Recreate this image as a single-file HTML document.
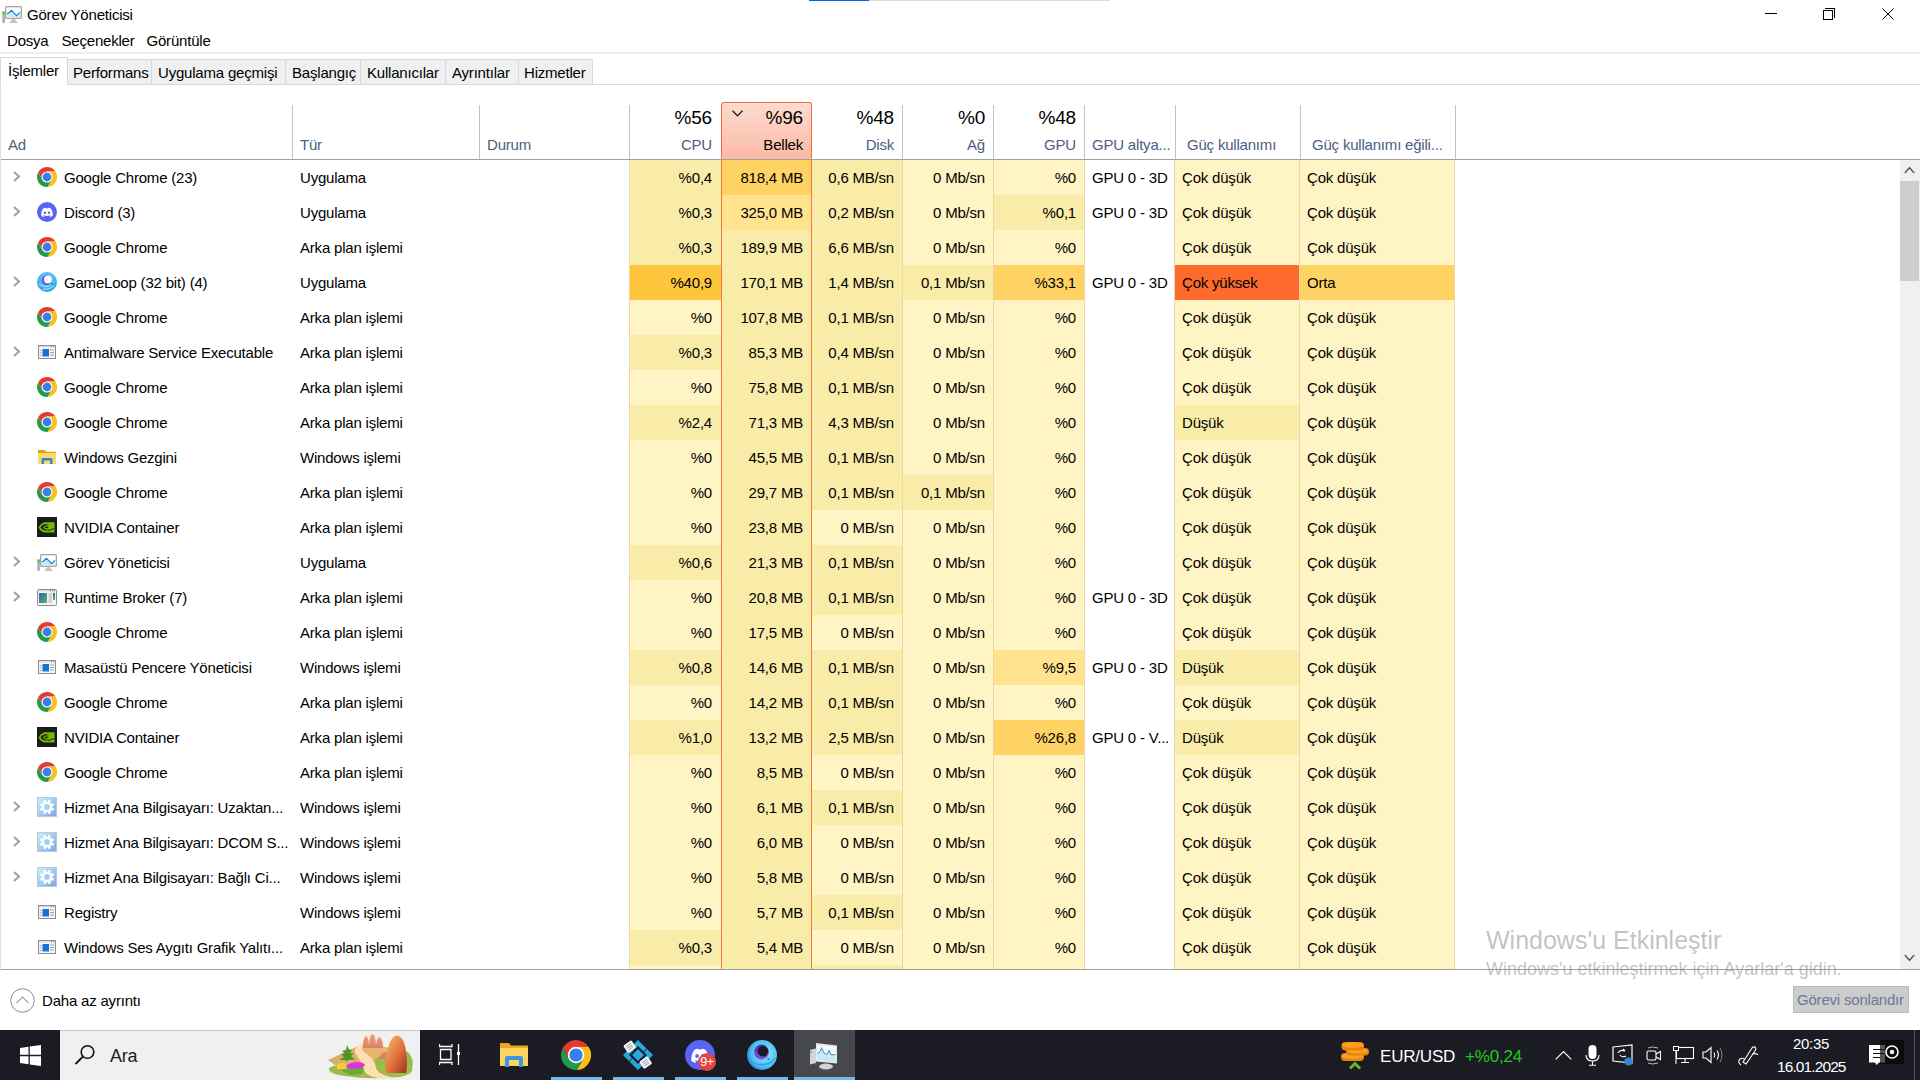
<!DOCTYPE html><html><head><meta charset="utf-8"><style>
*{margin:0;padding:0;box-sizing:border-box}
html,body{width:1920px;height:1080px;overflow:hidden;background:#fff}
body{position:relative;font-family:"Liberation Sans",sans-serif;font-size:15px;color:#000}
.a{position:absolute;white-space:nowrap}
.t{position:absolute;white-space:nowrap;line-height:20px;height:20px;letter-spacing:-0.2px}
.r{text-align:right}
.hl{color:#4c6080}
svg{display:block}
</style></head><body>

<div class="a" style="left:809px;top:0;width:60px;height:1px;background:#0068d0"></div>
<div class="a" style="left:869px;top:0;width:241px;height:1px;background:#dcdcdc"></div>
<div class="a" style="left:2px;top:4px"><svg width="20" height="20" viewBox="0 0 20 20"><rect x="0.2" y="7" width="2.8" height="12" rx="0.8" fill="#b4b4b4"/><rect x="0.5" y="8.3" width="2.2" height="1.8" fill="#30d030"/><rect x="3.6" y="2.6" width="15.8" height="11.8" rx="1" fill="#efefef" stroke="#a4a4a4" stroke-width="1.2"/><rect x="4.8" y="3.8" width="13.4" height="9.4" fill="#fff"/><path d="M4.8 9.5 L6.2 9.5 L9.5 6.3 L14.5 11.6 L18.2 8 V13.2 H4.8 Z" fill="#c4ecfc"/><path d="M4.8 9.5 L6.2 9.5 L9.5 6.3 L14.5 11.6 L18 8.3" stroke="#1a7cc8" stroke-width="1.1" fill="none"/><path d="M7 19 L10.5 15 L12.5 15 L16 19 Z" fill="#c4c4c4"/></svg></div>
<div class="t" style="top:4.80px;font-size:15px;left:27px;">Görev Yöneticisi</div>
<div class="a" style="left:1765px;top:13px;width:12px;height:1px;background:#000"></div>
<div class="a" style="left:1823px;top:10px;width:10px;height:10px;border:1px solid #000"></div>
<div class="a" style="left:1825px;top:8px;width:10px;height:10px;border-top:1px solid #000;border-right:1px solid #000"></div>
<svg class="a" style="left:1882px;top:8px" width="12" height="12" viewBox="0 0 12 12"><path d="M0.5 0.5 L11.5 11.5 M11.5 0.5 L0.5 11.5" stroke="#000" stroke-width="1"/></svg>
<div class="t" style="top:31.30px;font-size:15px;left:7px;">Dosya</div>
<div class="t" style="top:31.30px;font-size:15px;left:61.5px;">Seçenekler</div>
<div class="t" style="top:31.30px;font-size:15px;left:146.5px;">Görüntüle</div>
<div class="a" style="left:0;top:52px;width:1920px;height:2px;background:#f0f0f0"></div>
<div class="a" style="left:0;top:84px;width:1920px;height:1px;background:#d9d9d9"></div>
<div class="a" style="left:0;top:57px;width:68px;height:28px;background:#fff;border:1px solid #d9d9d9;border-bottom:none"></div>
<div class="t" style="top:61.00px;font-size:15px;left:8px;">İşlemler</div>
<div class="a" style="left:67px;top:59px;width:85px;height:26px;background:#f0f0f0;border:1px solid #d9d9d9"></div>
<div class="t" style="top:63.00px;font-size:15px;left:73px;">Performans</div>
<div class="a" style="left:151px;top:59px;width:135px;height:26px;background:#f0f0f0;border:1px solid #d9d9d9"></div>
<div class="t" style="top:63.00px;font-size:15px;left:158px;">Uygulama geçmişi</div>
<div class="a" style="left:285px;top:59px;width:76px;height:26px;background:#f0f0f0;border:1px solid #d9d9d9"></div>
<div class="t" style="top:63.00px;font-size:15px;left:292px;">Başlangıç</div>
<div class="a" style="left:360px;top:59px;width:86px;height:26px;background:#f0f0f0;border:1px solid #d9d9d9"></div>
<div class="t" style="top:63.00px;font-size:15px;left:367px;">Kullanıcılar</div>
<div class="a" style="left:445px;top:59px;width:74px;height:26px;background:#f0f0f0;border:1px solid #d9d9d9"></div>
<div class="t" style="top:63.00px;font-size:15px;left:452px;">Ayrıntılar</div>
<div class="a" style="left:518px;top:59px;width:75px;height:26px;background:#f0f0f0;border:1px solid #d9d9d9"></div>
<div class="t" style="top:63.00px;font-size:15px;left:524px;">Hizmetler</div>
<div class="a" style="left:0;top:85px;width:1px;height:885px;background:#e3e3e3"></div>
<div class="a" style="left:292px;top:105px;width:1px;height:54px;background:#c2c2c2"></div>
<div class="a" style="left:479px;top:105px;width:1px;height:54px;background:#c2c2c2"></div>
<div class="a" style="left:629px;top:105px;width:1px;height:54px;background:#c2c2c2"></div>
<div class="a" style="left:902px;top:105px;width:1px;height:54px;background:#c2c2c2"></div>
<div class="a" style="left:993px;top:105px;width:1px;height:54px;background:#c2c2c2"></div>
<div class="a" style="left:1084px;top:105px;width:1px;height:54px;background:#c2c2c2"></div>
<div class="a" style="left:1175px;top:105px;width:1px;height:54px;background:#c2c2c2"></div>
<div class="a" style="left:1300px;top:105px;width:1px;height:54px;background:#c2c2c2"></div>
<div class="a" style="left:1455px;top:105px;width:1px;height:54px;background:#c2c2c2"></div>
<div class="a" style="left:721px;top:102px;width:91px;height:58px;border:1px solid #f66a3a;border-bottom:none;border-radius:3px 3px 0 0;background:linear-gradient(#fddbd0,#fbb9a4)"></div>
<svg class="a" style="left:732px;top:110px" width="11" height="7" viewBox="0 0 11 7"><path d="M0.5 0.8 L5.5 5.8 L10.5 0.8" stroke="#222" stroke-width="1.3" fill="none"/></svg>
<div class="t" style="top:134.80px;font-size:15px;color:#4c6080;left:8px;">Ad</div>
<div class="t" style="top:134.80px;font-size:15px;color:#4c6080;left:300px;">Tür</div>
<div class="t" style="top:134.80px;font-size:15px;color:#4c6080;left:487px;">Durum</div>
<div class="t" style="top:108.42px;font-size:19px;right:1208px;">%56</div>
<div class="t" style="top:134.80px;font-size:15px;color:#4c6080;right:1208px;">CPU</div>
<div class="t" style="top:108.42px;font-size:19px;right:1117px;">%96</div>
<div class="t" style="top:134.80px;font-size:15px;color:#000;right:1117px;">Bellek</div>
<div class="t" style="top:108.42px;font-size:19px;right:1026px;">%48</div>
<div class="t" style="top:134.80px;font-size:15px;color:#4c6080;right:1026px;">Disk</div>
<div class="t" style="top:108.42px;font-size:19px;right:935px;">%0</div>
<div class="t" style="top:134.80px;font-size:15px;color:#4c6080;right:935px;">Ağ</div>
<div class="t" style="top:108.42px;font-size:19px;right:844px;">%48</div>
<div class="t" style="top:134.80px;font-size:15px;color:#4c6080;right:844px;">GPU</div>
<div class="t" style="top:134.80px;font-size:15px;color:#4c6080;left:1092px;">GPU altya...</div>
<div class="t" style="top:134.80px;font-size:15px;color:#4c6080;left:1187px;">Güç kullanımı</div>
<div class="t" style="top:134.80px;font-size:15px;color:#4c6080;left:1312px;">Güç kullanımı eğili...</div>
<div class="a" style="left:1px;top:159px;width:1919px;height:1px;background:#a0a0a0"></div>
<div class="a" style="left:629px;top:160px;width:92px;height:35px;background:#f9eca8"></div>
<div class="a" style="left:721px;top:160px;width:90px;height:35px;background:#ffd264"></div>
<div class="a" style="left:811px;top:160px;width:91px;height:35px;background:#f9eca8"></div>
<div class="a" style="left:902px;top:160px;width:91px;height:35px;background:#fff4c4"></div>
<div class="a" style="left:993px;top:160px;width:91px;height:35px;background:#fff4c4"></div>
<div class="a" style="left:1174px;top:160px;width:125px;height:35px;background:#fff4c4"></div>
<div class="a" style="left:1299px;top:160px;width:155px;height:35px;background:#fff4c4"></div>
<svg class="a" style="left:12px;top:170px" width="10" height="14" viewBox="0 0 10 14"><path d="M2 2 L7 6.5 L2 11" stroke="#a0a0a0" stroke-width="2" fill="none"/></svg>
<div class="a" style="left:37px;top:167px"><svg width="20" height="20" viewBox="0 0 20 20"><path d="M10.00 4.60 L18.42 4.60 A10 10 0 0 0 1.12 5.41 L5.32 12.70 Z" fill="#e33b2e"/><path d="M14.68 12.70 L10.47 19.99 A10 10 0 0 0 18.42 4.60 L10.00 4.60 Z" fill="#fbbf1a"/><path d="M5.32 12.70 L1.12 5.41 A10 10 0 0 0 10.47 19.99 L14.68 12.70 Z" fill="#239a48"/><circle cx="10" cy="10" r="5.5" fill="#fff"/><circle cx="10" cy="10" r="4.4" fill="#3b7ee8"/></svg></div>
<div class="t" style="top:167.80px;left:64px;">Google Chrome (23)</div>
<div class="t" style="top:167.80px;left:300px;">Uygulama</div>
<div class="t" style="top:167.80px;right:1208px;">%0,4</div>
<div class="t" style="top:167.80px;right:1117px;">818,4 MB</div>
<div class="t" style="top:167.80px;right:1026px;">0,6 MB/sn</div>
<div class="t" style="top:167.80px;right:935px;">0 Mb/sn</div>
<div class="t" style="top:167.80px;right:844px;">%0</div>
<div class="t" style="top:167.80px;left:1092px;">GPU 0 - 3D</div>
<div class="t" style="top:167.80px;left:1182px;">Çok düşük</div>
<div class="t" style="top:167.80px;left:1307px;">Çok düşük</div>
<div class="a" style="left:629px;top:195px;width:92px;height:35px;background:#f9eca8"></div>
<div class="a" style="left:721px;top:195px;width:90px;height:35px;background:#ffe38f"></div>
<div class="a" style="left:811px;top:195px;width:91px;height:35px;background:#f9eca8"></div>
<div class="a" style="left:902px;top:195px;width:91px;height:35px;background:#fff4c4"></div>
<div class="a" style="left:993px;top:195px;width:91px;height:35px;background:#f9eca8"></div>
<div class="a" style="left:1174px;top:195px;width:125px;height:35px;background:#fff4c4"></div>
<div class="a" style="left:1299px;top:195px;width:155px;height:35px;background:#fff4c4"></div>
<svg class="a" style="left:12px;top:205px" width="10" height="14" viewBox="0 0 10 14"><path d="M2 2 L7 6.5 L2 11" stroke="#a0a0a0" stroke-width="2" fill="none"/></svg>
<div class="a" style="left:37px;top:202px"><svg width="20" height="20" viewBox="0 0 20 20"><circle cx="10" cy="10" r="10" fill="#5865f2"/><path d="M4.2 13.8 C4.1 10.8 4.9 8.3 6.2 6.6 C7.1 6.1 8 5.8 8.7 5.8 L9 6.4 C9.7 6.3 10.3 6.3 11 6.4 L11.3 5.8 C12 5.8 12.9 6.1 13.8 6.6 C15.1 8.3 15.9 10.8 15.8 13.8 C15 14.5 14 14.9 13.1 15.1 L12.5 14.2 C13 14 13.4 13.8 13.8 13.5 L13.5 13.3 C11.3 14.3 8.7 14.3 6.5 13.3 L6.2 13.5 C6.6 13.8 7 14 7.5 14.2 L6.9 15.1 C6 14.9 5 14.5 4.2 13.8 Z" fill="#fff"/><ellipse cx="8" cy="10.7" rx="1.2" ry="1.3" fill="#5865f2"/><ellipse cx="12" cy="10.7" rx="1.2" ry="1.3" fill="#5865f2"/></svg></div>
<div class="t" style="top:202.80px;left:64px;">Discord (3)</div>
<div class="t" style="top:202.80px;left:300px;">Uygulama</div>
<div class="t" style="top:202.80px;right:1208px;">%0,3</div>
<div class="t" style="top:202.80px;right:1117px;">325,0 MB</div>
<div class="t" style="top:202.80px;right:1026px;">0,2 MB/sn</div>
<div class="t" style="top:202.80px;right:935px;">0 Mb/sn</div>
<div class="t" style="top:202.80px;right:844px;">%0,1</div>
<div class="t" style="top:202.80px;left:1092px;">GPU 0 - 3D</div>
<div class="t" style="top:202.80px;left:1182px;">Çok düşük</div>
<div class="t" style="top:202.80px;left:1307px;">Çok düşük</div>
<div class="a" style="left:629px;top:230px;width:92px;height:35px;background:#f9eca8"></div>
<div class="a" style="left:721px;top:230px;width:90px;height:35px;background:#f9eca8"></div>
<div class="a" style="left:811px;top:230px;width:91px;height:35px;background:#f9eca8"></div>
<div class="a" style="left:902px;top:230px;width:91px;height:35px;background:#fff4c4"></div>
<div class="a" style="left:993px;top:230px;width:91px;height:35px;background:#fff4c4"></div>
<div class="a" style="left:1174px;top:230px;width:125px;height:35px;background:#fff4c4"></div>
<div class="a" style="left:1299px;top:230px;width:155px;height:35px;background:#fff4c4"></div>
<div class="a" style="left:37px;top:237px"><svg width="20" height="20" viewBox="0 0 20 20"><path d="M10.00 4.60 L18.42 4.60 A10 10 0 0 0 1.12 5.41 L5.32 12.70 Z" fill="#e33b2e"/><path d="M14.68 12.70 L10.47 19.99 A10 10 0 0 0 18.42 4.60 L10.00 4.60 Z" fill="#fbbf1a"/><path d="M5.32 12.70 L1.12 5.41 A10 10 0 0 0 10.47 19.99 L14.68 12.70 Z" fill="#239a48"/><circle cx="10" cy="10" r="5.5" fill="#fff"/><circle cx="10" cy="10" r="4.4" fill="#3b7ee8"/></svg></div>
<div class="t" style="top:237.80px;left:64px;">Google Chrome</div>
<div class="t" style="top:237.80px;left:300px;">Arka plan işlemi</div>
<div class="t" style="top:237.80px;right:1208px;">%0,3</div>
<div class="t" style="top:237.80px;right:1117px;">189,9 MB</div>
<div class="t" style="top:237.80px;right:1026px;">6,6 MB/sn</div>
<div class="t" style="top:237.80px;right:935px;">0 Mb/sn</div>
<div class="t" style="top:237.80px;right:844px;">%0</div>
<div class="t" style="top:237.80px;left:1182px;">Çok düşük</div>
<div class="t" style="top:237.80px;left:1307px;">Çok düşük</div>
<div class="a" style="left:629px;top:265px;width:92px;height:35px;background:#ffc53d"></div>
<div class="a" style="left:721px;top:265px;width:90px;height:35px;background:#f9eca8"></div>
<div class="a" style="left:811px;top:265px;width:91px;height:35px;background:#f9eca8"></div>
<div class="a" style="left:902px;top:265px;width:91px;height:35px;background:#f9eca8"></div>
<div class="a" style="left:993px;top:265px;width:91px;height:35px;background:#ffd264"></div>
<div class="a" style="left:1174px;top:265px;width:125px;height:35px;background:#fc6a2c"></div>
<div class="a" style="left:1299px;top:265px;width:155px;height:35px;background:#ffd264"></div>
<svg class="a" style="left:12px;top:275px" width="10" height="14" viewBox="0 0 10 14"><path d="M2 2 L7 6.5 L2 11" stroke="#a0a0a0" stroke-width="2" fill="none"/></svg>
<div class="a" style="left:37px;top:272px"><svg width="20" height="20" viewBox="0 0 20 20"><defs><radialGradient id="gl" cx="0.5" cy="0.4" r="0.65"><stop offset="0" stop-color="#7fe3fb"/><stop offset="0.7" stop-color="#3cb4ef"/><stop offset="1" stop-color="#2a86d8"/></radialGradient></defs><circle cx="10" cy="10" r="10" fill="url(#gl)"/><circle cx="9.6" cy="8.2" r="5" fill="#7a4fd8"/><circle cx="10.9" cy="7.4" r="3.9" fill="#fbfbff"/><path d="M2 12.5 Q7 16 13 14 M6 17.5 Q12 18 17 14" stroke="#9ee6fa" stroke-width="1" fill="none"/><path d="M14 11.5 L16 12" stroke="#2a70c0" stroke-width="1"/></svg></div>
<div class="t" style="top:272.80px;left:64px;">GameLoop (32 bit) (4)</div>
<div class="t" style="top:272.80px;left:300px;">Uygulama</div>
<div class="t" style="top:272.80px;right:1208px;">%40,9</div>
<div class="t" style="top:272.80px;right:1117px;">170,1 MB</div>
<div class="t" style="top:272.80px;right:1026px;">1,4 MB/sn</div>
<div class="t" style="top:272.80px;right:935px;">0,1 Mb/sn</div>
<div class="t" style="top:272.80px;right:844px;">%33,1</div>
<div class="t" style="top:272.80px;left:1092px;">GPU 0 - 3D</div>
<div class="t" style="top:272.80px;left:1182px;">Çok yüksek</div>
<div class="t" style="top:272.80px;left:1307px;">Orta</div>
<div class="a" style="left:629px;top:300px;width:92px;height:35px;background:#fff4c4"></div>
<div class="a" style="left:721px;top:300px;width:90px;height:35px;background:#f9eca8"></div>
<div class="a" style="left:811px;top:300px;width:91px;height:35px;background:#f9eca8"></div>
<div class="a" style="left:902px;top:300px;width:91px;height:35px;background:#fff4c4"></div>
<div class="a" style="left:993px;top:300px;width:91px;height:35px;background:#fff4c4"></div>
<div class="a" style="left:1174px;top:300px;width:125px;height:35px;background:#fff4c4"></div>
<div class="a" style="left:1299px;top:300px;width:155px;height:35px;background:#fff4c4"></div>
<div class="a" style="left:37px;top:307px"><svg width="20" height="20" viewBox="0 0 20 20"><path d="M10.00 4.60 L18.42 4.60 A10 10 0 0 0 1.12 5.41 L5.32 12.70 Z" fill="#e33b2e"/><path d="M14.68 12.70 L10.47 19.99 A10 10 0 0 0 18.42 4.60 L10.00 4.60 Z" fill="#fbbf1a"/><path d="M5.32 12.70 L1.12 5.41 A10 10 0 0 0 10.47 19.99 L14.68 12.70 Z" fill="#239a48"/><circle cx="10" cy="10" r="5.5" fill="#fff"/><circle cx="10" cy="10" r="4.4" fill="#3b7ee8"/></svg></div>
<div class="t" style="top:307.80px;left:64px;">Google Chrome</div>
<div class="t" style="top:307.80px;left:300px;">Arka plan işlemi</div>
<div class="t" style="top:307.80px;right:1208px;">%0</div>
<div class="t" style="top:307.80px;right:1117px;">107,8 MB</div>
<div class="t" style="top:307.80px;right:1026px;">0,1 MB/sn</div>
<div class="t" style="top:307.80px;right:935px;">0 Mb/sn</div>
<div class="t" style="top:307.80px;right:844px;">%0</div>
<div class="t" style="top:307.80px;left:1182px;">Çok düşük</div>
<div class="t" style="top:307.80px;left:1307px;">Çok düşük</div>
<div class="a" style="left:629px;top:335px;width:92px;height:35px;background:#f9eca8"></div>
<div class="a" style="left:721px;top:335px;width:90px;height:35px;background:#f9eca8"></div>
<div class="a" style="left:811px;top:335px;width:91px;height:35px;background:#f9eca8"></div>
<div class="a" style="left:902px;top:335px;width:91px;height:35px;background:#fff4c4"></div>
<div class="a" style="left:993px;top:335px;width:91px;height:35px;background:#fff4c4"></div>
<div class="a" style="left:1174px;top:335px;width:125px;height:35px;background:#fff4c4"></div>
<div class="a" style="left:1299px;top:335px;width:155px;height:35px;background:#fff4c4"></div>
<svg class="a" style="left:12px;top:345px" width="10" height="14" viewBox="0 0 10 14"><path d="M2 2 L7 6.5 L2 11" stroke="#a0a0a0" stroke-width="2" fill="none"/></svg>
<div class="a" style="left:37px;top:342px"><svg width="20" height="20" viewBox="0 0 20 20"><rect x="1.5" y="3.5" width="17" height="13" fill="#f7f7f7" stroke="#8c8c8c"/><rect x="2" y="4" width="16" height="1.5" fill="#dedede"/><rect x="14" y="4.2" width="1" height="1" fill="#888"/><rect x="16" y="4.2" width="1" height="1" fill="#888"/><rect x="5.5" y="7" width="6.5" height="7.5" fill="#1372d6"/><rect x="13" y="7.5" width="4" height="1" fill="#a0a0a0"/><rect x="13" y="10" width="4" height="1" fill="#a0a0a0"/><rect x="13" y="12.5" width="4" height="1" fill="#a0a0a0"/><rect x="2.8" y="8" width="1.6" height="1" fill="#a0a0a0"/><rect x="2.8" y="10.5" width="1.6" height="1" fill="#a0a0a0"/><rect x="2.8" y="13" width="1.6" height="1" fill="#a0a0a0"/></svg></div>
<div class="t" style="top:342.80px;left:64px;">Antimalware Service Executable</div>
<div class="t" style="top:342.80px;left:300px;">Arka plan işlemi</div>
<div class="t" style="top:342.80px;right:1208px;">%0,3</div>
<div class="t" style="top:342.80px;right:1117px;">85,3 MB</div>
<div class="t" style="top:342.80px;right:1026px;">0,4 MB/sn</div>
<div class="t" style="top:342.80px;right:935px;">0 Mb/sn</div>
<div class="t" style="top:342.80px;right:844px;">%0</div>
<div class="t" style="top:342.80px;left:1182px;">Çok düşük</div>
<div class="t" style="top:342.80px;left:1307px;">Çok düşük</div>
<div class="a" style="left:629px;top:370px;width:92px;height:35px;background:#fff4c4"></div>
<div class="a" style="left:721px;top:370px;width:90px;height:35px;background:#f9eca8"></div>
<div class="a" style="left:811px;top:370px;width:91px;height:35px;background:#f9eca8"></div>
<div class="a" style="left:902px;top:370px;width:91px;height:35px;background:#fff4c4"></div>
<div class="a" style="left:993px;top:370px;width:91px;height:35px;background:#fff4c4"></div>
<div class="a" style="left:1174px;top:370px;width:125px;height:35px;background:#fff4c4"></div>
<div class="a" style="left:1299px;top:370px;width:155px;height:35px;background:#fff4c4"></div>
<div class="a" style="left:37px;top:377px"><svg width="20" height="20" viewBox="0 0 20 20"><path d="M10.00 4.60 L18.42 4.60 A10 10 0 0 0 1.12 5.41 L5.32 12.70 Z" fill="#e33b2e"/><path d="M14.68 12.70 L10.47 19.99 A10 10 0 0 0 18.42 4.60 L10.00 4.60 Z" fill="#fbbf1a"/><path d="M5.32 12.70 L1.12 5.41 A10 10 0 0 0 10.47 19.99 L14.68 12.70 Z" fill="#239a48"/><circle cx="10" cy="10" r="5.5" fill="#fff"/><circle cx="10" cy="10" r="4.4" fill="#3b7ee8"/></svg></div>
<div class="t" style="top:377.80px;left:64px;">Google Chrome</div>
<div class="t" style="top:377.80px;left:300px;">Arka plan işlemi</div>
<div class="t" style="top:377.80px;right:1208px;">%0</div>
<div class="t" style="top:377.80px;right:1117px;">75,8 MB</div>
<div class="t" style="top:377.80px;right:1026px;">0,1 MB/sn</div>
<div class="t" style="top:377.80px;right:935px;">0 Mb/sn</div>
<div class="t" style="top:377.80px;right:844px;">%0</div>
<div class="t" style="top:377.80px;left:1182px;">Çok düşük</div>
<div class="t" style="top:377.80px;left:1307px;">Çok düşük</div>
<div class="a" style="left:629px;top:405px;width:92px;height:35px;background:#f9eca8"></div>
<div class="a" style="left:721px;top:405px;width:90px;height:35px;background:#f9eca8"></div>
<div class="a" style="left:811px;top:405px;width:91px;height:35px;background:#f9eca8"></div>
<div class="a" style="left:902px;top:405px;width:91px;height:35px;background:#fff4c4"></div>
<div class="a" style="left:993px;top:405px;width:91px;height:35px;background:#fff4c4"></div>
<div class="a" style="left:1174px;top:405px;width:125px;height:35px;background:#f9eca8"></div>
<div class="a" style="left:1299px;top:405px;width:155px;height:35px;background:#fff4c4"></div>
<div class="a" style="left:37px;top:412px"><svg width="20" height="20" viewBox="0 0 20 20"><path d="M10.00 4.60 L18.42 4.60 A10 10 0 0 0 1.12 5.41 L5.32 12.70 Z" fill="#e33b2e"/><path d="M14.68 12.70 L10.47 19.99 A10 10 0 0 0 18.42 4.60 L10.00 4.60 Z" fill="#fbbf1a"/><path d="M5.32 12.70 L1.12 5.41 A10 10 0 0 0 10.47 19.99 L14.68 12.70 Z" fill="#239a48"/><circle cx="10" cy="10" r="5.5" fill="#fff"/><circle cx="10" cy="10" r="4.4" fill="#3b7ee8"/></svg></div>
<div class="t" style="top:412.80px;left:64px;">Google Chrome</div>
<div class="t" style="top:412.80px;left:300px;">Arka plan işlemi</div>
<div class="t" style="top:412.80px;right:1208px;">%2,4</div>
<div class="t" style="top:412.80px;right:1117px;">71,3 MB</div>
<div class="t" style="top:412.80px;right:1026px;">4,3 MB/sn</div>
<div class="t" style="top:412.80px;right:935px;">0 Mb/sn</div>
<div class="t" style="top:412.80px;right:844px;">%0</div>
<div class="t" style="top:412.80px;left:1182px;">Düşük</div>
<div class="t" style="top:412.80px;left:1307px;">Çok düşük</div>
<div class="a" style="left:629px;top:440px;width:92px;height:35px;background:#fff4c4"></div>
<div class="a" style="left:721px;top:440px;width:90px;height:35px;background:#f9eca8"></div>
<div class="a" style="left:811px;top:440px;width:91px;height:35px;background:#f9eca8"></div>
<div class="a" style="left:902px;top:440px;width:91px;height:35px;background:#fff4c4"></div>
<div class="a" style="left:993px;top:440px;width:91px;height:35px;background:#fff4c4"></div>
<div class="a" style="left:1174px;top:440px;width:125px;height:35px;background:#fff4c4"></div>
<div class="a" style="left:1299px;top:440px;width:155px;height:35px;background:#fff4c4"></div>
<div class="a" style="left:37px;top:447px"><svg width="20" height="20" viewBox="0 0 20 20"><path d="M1 3 H7.5 L9.5 4.8 H19 V17 H1 Z" fill="#dca21a"/><rect x="1" y="6" width="18" height="11" fill="#ffd866"/><path d="M4.5 17 V12 Q4.5 11 5.5 11 H14.5 Q15.5 11 15.5 12 V17 H13 V13.5 H7 V17 Z" fill="#2f8ad8"/></svg></div>
<div class="t" style="top:447.80px;left:64px;">Windows Gezgini</div>
<div class="t" style="top:447.80px;left:300px;">Windows işlemi</div>
<div class="t" style="top:447.80px;right:1208px;">%0</div>
<div class="t" style="top:447.80px;right:1117px;">45,5 MB</div>
<div class="t" style="top:447.80px;right:1026px;">0,1 MB/sn</div>
<div class="t" style="top:447.80px;right:935px;">0 Mb/sn</div>
<div class="t" style="top:447.80px;right:844px;">%0</div>
<div class="t" style="top:447.80px;left:1182px;">Çok düşük</div>
<div class="t" style="top:447.80px;left:1307px;">Çok düşük</div>
<div class="a" style="left:629px;top:475px;width:92px;height:35px;background:#fff4c4"></div>
<div class="a" style="left:721px;top:475px;width:90px;height:35px;background:#f9eca8"></div>
<div class="a" style="left:811px;top:475px;width:91px;height:35px;background:#f9eca8"></div>
<div class="a" style="left:902px;top:475px;width:91px;height:35px;background:#f9eca8"></div>
<div class="a" style="left:993px;top:475px;width:91px;height:35px;background:#fff4c4"></div>
<div class="a" style="left:1174px;top:475px;width:125px;height:35px;background:#fff4c4"></div>
<div class="a" style="left:1299px;top:475px;width:155px;height:35px;background:#fff4c4"></div>
<div class="a" style="left:37px;top:482px"><svg width="20" height="20" viewBox="0 0 20 20"><path d="M10.00 4.60 L18.42 4.60 A10 10 0 0 0 1.12 5.41 L5.32 12.70 Z" fill="#e33b2e"/><path d="M14.68 12.70 L10.47 19.99 A10 10 0 0 0 18.42 4.60 L10.00 4.60 Z" fill="#fbbf1a"/><path d="M5.32 12.70 L1.12 5.41 A10 10 0 0 0 10.47 19.99 L14.68 12.70 Z" fill="#239a48"/><circle cx="10" cy="10" r="5.5" fill="#fff"/><circle cx="10" cy="10" r="4.4" fill="#3b7ee8"/></svg></div>
<div class="t" style="top:482.80px;left:64px;">Google Chrome</div>
<div class="t" style="top:482.80px;left:300px;">Arka plan işlemi</div>
<div class="t" style="top:482.80px;right:1208px;">%0</div>
<div class="t" style="top:482.80px;right:1117px;">29,7 MB</div>
<div class="t" style="top:482.80px;right:1026px;">0,1 MB/sn</div>
<div class="t" style="top:482.80px;right:935px;">0,1 Mb/sn</div>
<div class="t" style="top:482.80px;right:844px;">%0</div>
<div class="t" style="top:482.80px;left:1182px;">Çok düşük</div>
<div class="t" style="top:482.80px;left:1307px;">Çok düşük</div>
<div class="a" style="left:629px;top:510px;width:92px;height:35px;background:#fff4c4"></div>
<div class="a" style="left:721px;top:510px;width:90px;height:35px;background:#f9eca8"></div>
<div class="a" style="left:811px;top:510px;width:91px;height:35px;background:#fff4c4"></div>
<div class="a" style="left:902px;top:510px;width:91px;height:35px;background:#fff4c4"></div>
<div class="a" style="left:993px;top:510px;width:91px;height:35px;background:#fff4c4"></div>
<div class="a" style="left:1174px;top:510px;width:125px;height:35px;background:#fff4c4"></div>
<div class="a" style="left:1299px;top:510px;width:155px;height:35px;background:#fff4c4"></div>
<div class="a" style="left:37px;top:517px"><svg width="20" height="20" viewBox="0 0 20 20"><rect x="0" y="0" width="20" height="20" fill="#1c1c1c"/><path d="M7.5 5.2 H17.5 V15.5 H7.5 C4.5 15 2.5 13 1.8 10.5 C3 7.5 5 5.8 7.5 5.2 Z" fill="#76b900"/><path d="M3.5 10.5 C5 7.5 9 6.5 12 8 C9.5 8 7 9 6 10.8 C7.5 12.5 10 13 12.5 12.5 C9.5 14.2 5.5 13.5 3.5 10.5 Z" fill="#1c1c1c"/><path d="M7.5 10.6 C8.5 9.3 10.5 9.2 11.8 10.2 C10.5 11.3 8.8 11.5 7.5 10.6 Z" fill="#1c1c1c"/><path d="M11 13.5 L17.5 11.5" stroke="#1c1c1c" stroke-width="0.9"/></svg></div>
<div class="t" style="top:517.80px;left:64px;">NVIDIA Container</div>
<div class="t" style="top:517.80px;left:300px;">Arka plan işlemi</div>
<div class="t" style="top:517.80px;right:1208px;">%0</div>
<div class="t" style="top:517.80px;right:1117px;">23,8 MB</div>
<div class="t" style="top:517.80px;right:1026px;">0 MB/sn</div>
<div class="t" style="top:517.80px;right:935px;">0 Mb/sn</div>
<div class="t" style="top:517.80px;right:844px;">%0</div>
<div class="t" style="top:517.80px;left:1182px;">Çok düşük</div>
<div class="t" style="top:517.80px;left:1307px;">Çok düşük</div>
<div class="a" style="left:629px;top:545px;width:92px;height:35px;background:#f9eca8"></div>
<div class="a" style="left:721px;top:545px;width:90px;height:35px;background:#f9eca8"></div>
<div class="a" style="left:811px;top:545px;width:91px;height:35px;background:#f9eca8"></div>
<div class="a" style="left:902px;top:545px;width:91px;height:35px;background:#fff4c4"></div>
<div class="a" style="left:993px;top:545px;width:91px;height:35px;background:#fff4c4"></div>
<div class="a" style="left:1174px;top:545px;width:125px;height:35px;background:#fff4c4"></div>
<div class="a" style="left:1299px;top:545px;width:155px;height:35px;background:#fff4c4"></div>
<svg class="a" style="left:12px;top:555px" width="10" height="14" viewBox="0 0 10 14"><path d="M2 2 L7 6.5 L2 11" stroke="#a0a0a0" stroke-width="2" fill="none"/></svg>
<div class="a" style="left:37px;top:552px"><svg width="20" height="20" viewBox="0 0 20 20"><rect x="0.2" y="7" width="2.8" height="12" rx="0.8" fill="#b4b4b4"/><rect x="0.5" y="8.3" width="2.2" height="1.8" fill="#30d030"/><rect x="3.6" y="2.6" width="15.8" height="11.8" rx="1" fill="#efefef" stroke="#a4a4a4" stroke-width="1.2"/><rect x="4.8" y="3.8" width="13.4" height="9.4" fill="#fff"/><path d="M4.8 9.5 L6.2 9.5 L9.5 6.3 L14.5 11.6 L18.2 8 V13.2 H4.8 Z" fill="#c4ecfc"/><path d="M4.8 9.5 L6.2 9.5 L9.5 6.3 L14.5 11.6 L18 8.3" stroke="#1a7cc8" stroke-width="1.1" fill="none"/><path d="M7 19 L10.5 15 L12.5 15 L16 19 Z" fill="#c4c4c4"/></svg></div>
<div class="t" style="top:552.80px;left:64px;">Görev Yöneticisi</div>
<div class="t" style="top:552.80px;left:300px;">Uygulama</div>
<div class="t" style="top:552.80px;right:1208px;">%0,6</div>
<div class="t" style="top:552.80px;right:1117px;">21,3 MB</div>
<div class="t" style="top:552.80px;right:1026px;">0,1 MB/sn</div>
<div class="t" style="top:552.80px;right:935px;">0 Mb/sn</div>
<div class="t" style="top:552.80px;right:844px;">%0</div>
<div class="t" style="top:552.80px;left:1182px;">Çok düşük</div>
<div class="t" style="top:552.80px;left:1307px;">Çok düşük</div>
<div class="a" style="left:629px;top:580px;width:92px;height:35px;background:#fff4c4"></div>
<div class="a" style="left:721px;top:580px;width:90px;height:35px;background:#f9eca8"></div>
<div class="a" style="left:811px;top:580px;width:91px;height:35px;background:#f9eca8"></div>
<div class="a" style="left:902px;top:580px;width:91px;height:35px;background:#fff4c4"></div>
<div class="a" style="left:993px;top:580px;width:91px;height:35px;background:#fff4c4"></div>
<div class="a" style="left:1174px;top:580px;width:125px;height:35px;background:#fff4c4"></div>
<div class="a" style="left:1299px;top:580px;width:155px;height:35px;background:#fff4c4"></div>
<svg class="a" style="left:12px;top:590px" width="10" height="14" viewBox="0 0 10 14"><path d="M2 2 L7 6.5 L2 11" stroke="#a0a0a0" stroke-width="2" fill="none"/></svg>
<div class="a" style="left:37px;top:587px"><svg width="20" height="20" viewBox="0 0 20 20"><defs><linearGradient id="rb" x1="0" y1="0" x2="1" y2="1"><stop offset="0" stop-color="#2f62b0"/><stop offset="1" stop-color="#58b068"/></linearGradient><linearGradient id="rb2" x1="0" y1="0" x2="0" y2="1"><stop offset="0" stop-color="#2f62b0"/><stop offset="1" stop-color="#58c060"/></linearGradient></defs><rect x="0.5" y="2.5" width="19" height="16" rx="1" fill="#f4f4f4" stroke="#8c8c8c"/><rect x="1" y="3" width="18" height="1.5" fill="#dadada"/><rect x="13" y="3.2" width="1" height="1" fill="#777"/><rect x="15" y="3.2" width="1" height="1" fill="#777"/><rect x="17" y="3.2" width="1" height="1" fill="#777"/><rect x="2" y="6" width="8" height="10" fill="url(#rb)"/><rect x="11.5" y="6.5" width="3.5" height="1" fill="#b0b0b0"/><rect x="11.5" y="8.5" width="3.5" height="1" fill="#b0b0b0"/><rect x="11.5" y="10.5" width="3.5" height="1" fill="#b0b0b0"/><rect x="11.5" y="12.5" width="3.5" height="1" fill="#b0b0b0"/><rect x="11.5" y="14.5" width="3.5" height="1" fill="#b0b0b0"/><rect x="16" y="6" width="2" height="7" fill="url(#rb2)"/></svg></div>
<div class="t" style="top:587.80px;left:64px;">Runtime Broker (7)</div>
<div class="t" style="top:587.80px;left:300px;">Arka plan işlemi</div>
<div class="t" style="top:587.80px;right:1208px;">%0</div>
<div class="t" style="top:587.80px;right:1117px;">20,8 MB</div>
<div class="t" style="top:587.80px;right:1026px;">0,1 MB/sn</div>
<div class="t" style="top:587.80px;right:935px;">0 Mb/sn</div>
<div class="t" style="top:587.80px;right:844px;">%0</div>
<div class="t" style="top:587.80px;left:1092px;">GPU 0 - 3D</div>
<div class="t" style="top:587.80px;left:1182px;">Çok düşük</div>
<div class="t" style="top:587.80px;left:1307px;">Çok düşük</div>
<div class="a" style="left:629px;top:615px;width:92px;height:35px;background:#fff4c4"></div>
<div class="a" style="left:721px;top:615px;width:90px;height:35px;background:#f9eca8"></div>
<div class="a" style="left:811px;top:615px;width:91px;height:35px;background:#fff4c4"></div>
<div class="a" style="left:902px;top:615px;width:91px;height:35px;background:#fff4c4"></div>
<div class="a" style="left:993px;top:615px;width:91px;height:35px;background:#fff4c4"></div>
<div class="a" style="left:1174px;top:615px;width:125px;height:35px;background:#fff4c4"></div>
<div class="a" style="left:1299px;top:615px;width:155px;height:35px;background:#fff4c4"></div>
<div class="a" style="left:37px;top:622px"><svg width="20" height="20" viewBox="0 0 20 20"><path d="M10.00 4.60 L18.42 4.60 A10 10 0 0 0 1.12 5.41 L5.32 12.70 Z" fill="#e33b2e"/><path d="M14.68 12.70 L10.47 19.99 A10 10 0 0 0 18.42 4.60 L10.00 4.60 Z" fill="#fbbf1a"/><path d="M5.32 12.70 L1.12 5.41 A10 10 0 0 0 10.47 19.99 L14.68 12.70 Z" fill="#239a48"/><circle cx="10" cy="10" r="5.5" fill="#fff"/><circle cx="10" cy="10" r="4.4" fill="#3b7ee8"/></svg></div>
<div class="t" style="top:622.80px;left:64px;">Google Chrome</div>
<div class="t" style="top:622.80px;left:300px;">Arka plan işlemi</div>
<div class="t" style="top:622.80px;right:1208px;">%0</div>
<div class="t" style="top:622.80px;right:1117px;">17,5 MB</div>
<div class="t" style="top:622.80px;right:1026px;">0 MB/sn</div>
<div class="t" style="top:622.80px;right:935px;">0 Mb/sn</div>
<div class="t" style="top:622.80px;right:844px;">%0</div>
<div class="t" style="top:622.80px;left:1182px;">Çok düşük</div>
<div class="t" style="top:622.80px;left:1307px;">Çok düşük</div>
<div class="a" style="left:629px;top:650px;width:92px;height:35px;background:#f9eca8"></div>
<div class="a" style="left:721px;top:650px;width:90px;height:35px;background:#f9eca8"></div>
<div class="a" style="left:811px;top:650px;width:91px;height:35px;background:#f9eca8"></div>
<div class="a" style="left:902px;top:650px;width:91px;height:35px;background:#fff4c4"></div>
<div class="a" style="left:993px;top:650px;width:91px;height:35px;background:#ffe38f"></div>
<div class="a" style="left:1174px;top:650px;width:125px;height:35px;background:#f9eca8"></div>
<div class="a" style="left:1299px;top:650px;width:155px;height:35px;background:#fff4c4"></div>
<div class="a" style="left:37px;top:657px"><svg width="20" height="20" viewBox="0 0 20 20"><rect x="1.5" y="3.5" width="17" height="13" fill="#f7f7f7" stroke="#8c8c8c"/><rect x="2" y="4" width="16" height="1.5" fill="#dedede"/><rect x="14" y="4.2" width="1" height="1" fill="#888"/><rect x="16" y="4.2" width="1" height="1" fill="#888"/><rect x="5.5" y="7" width="6.5" height="7.5" fill="#1372d6"/><rect x="13" y="7.5" width="4" height="1" fill="#a0a0a0"/><rect x="13" y="10" width="4" height="1" fill="#a0a0a0"/><rect x="13" y="12.5" width="4" height="1" fill="#a0a0a0"/><rect x="2.8" y="8" width="1.6" height="1" fill="#a0a0a0"/><rect x="2.8" y="10.5" width="1.6" height="1" fill="#a0a0a0"/><rect x="2.8" y="13" width="1.6" height="1" fill="#a0a0a0"/></svg></div>
<div class="t" style="top:657.80px;left:64px;">Masaüstü Pencere Yöneticisi</div>
<div class="t" style="top:657.80px;left:300px;">Windows işlemi</div>
<div class="t" style="top:657.80px;right:1208px;">%0,8</div>
<div class="t" style="top:657.80px;right:1117px;">14,6 MB</div>
<div class="t" style="top:657.80px;right:1026px;">0,1 MB/sn</div>
<div class="t" style="top:657.80px;right:935px;">0 Mb/sn</div>
<div class="t" style="top:657.80px;right:844px;">%9,5</div>
<div class="t" style="top:657.80px;left:1092px;">GPU 0 - 3D</div>
<div class="t" style="top:657.80px;left:1182px;">Düşük</div>
<div class="t" style="top:657.80px;left:1307px;">Çok düşük</div>
<div class="a" style="left:629px;top:685px;width:92px;height:35px;background:#fff4c4"></div>
<div class="a" style="left:721px;top:685px;width:90px;height:35px;background:#f9eca8"></div>
<div class="a" style="left:811px;top:685px;width:91px;height:35px;background:#f9eca8"></div>
<div class="a" style="left:902px;top:685px;width:91px;height:35px;background:#fff4c4"></div>
<div class="a" style="left:993px;top:685px;width:91px;height:35px;background:#fff4c4"></div>
<div class="a" style="left:1174px;top:685px;width:125px;height:35px;background:#fff4c4"></div>
<div class="a" style="left:1299px;top:685px;width:155px;height:35px;background:#fff4c4"></div>
<div class="a" style="left:37px;top:692px"><svg width="20" height="20" viewBox="0 0 20 20"><path d="M10.00 4.60 L18.42 4.60 A10 10 0 0 0 1.12 5.41 L5.32 12.70 Z" fill="#e33b2e"/><path d="M14.68 12.70 L10.47 19.99 A10 10 0 0 0 18.42 4.60 L10.00 4.60 Z" fill="#fbbf1a"/><path d="M5.32 12.70 L1.12 5.41 A10 10 0 0 0 10.47 19.99 L14.68 12.70 Z" fill="#239a48"/><circle cx="10" cy="10" r="5.5" fill="#fff"/><circle cx="10" cy="10" r="4.4" fill="#3b7ee8"/></svg></div>
<div class="t" style="top:692.80px;left:64px;">Google Chrome</div>
<div class="t" style="top:692.80px;left:300px;">Arka plan işlemi</div>
<div class="t" style="top:692.80px;right:1208px;">%0</div>
<div class="t" style="top:692.80px;right:1117px;">14,2 MB</div>
<div class="t" style="top:692.80px;right:1026px;">0,1 MB/sn</div>
<div class="t" style="top:692.80px;right:935px;">0 Mb/sn</div>
<div class="t" style="top:692.80px;right:844px;">%0</div>
<div class="t" style="top:692.80px;left:1182px;">Çok düşük</div>
<div class="t" style="top:692.80px;left:1307px;">Çok düşük</div>
<div class="a" style="left:629px;top:720px;width:92px;height:35px;background:#f9eca8"></div>
<div class="a" style="left:721px;top:720px;width:90px;height:35px;background:#f9eca8"></div>
<div class="a" style="left:811px;top:720px;width:91px;height:35px;background:#f9eca8"></div>
<div class="a" style="left:902px;top:720px;width:91px;height:35px;background:#fff4c4"></div>
<div class="a" style="left:993px;top:720px;width:91px;height:35px;background:#ffd264"></div>
<div class="a" style="left:1174px;top:720px;width:125px;height:35px;background:#f9eca8"></div>
<div class="a" style="left:1299px;top:720px;width:155px;height:35px;background:#fff4c4"></div>
<div class="a" style="left:37px;top:727px"><svg width="20" height="20" viewBox="0 0 20 20"><rect x="0" y="0" width="20" height="20" fill="#1c1c1c"/><path d="M7.5 5.2 H17.5 V15.5 H7.5 C4.5 15 2.5 13 1.8 10.5 C3 7.5 5 5.8 7.5 5.2 Z" fill="#76b900"/><path d="M3.5 10.5 C5 7.5 9 6.5 12 8 C9.5 8 7 9 6 10.8 C7.5 12.5 10 13 12.5 12.5 C9.5 14.2 5.5 13.5 3.5 10.5 Z" fill="#1c1c1c"/><path d="M7.5 10.6 C8.5 9.3 10.5 9.2 11.8 10.2 C10.5 11.3 8.8 11.5 7.5 10.6 Z" fill="#1c1c1c"/><path d="M11 13.5 L17.5 11.5" stroke="#1c1c1c" stroke-width="0.9"/></svg></div>
<div class="t" style="top:727.80px;left:64px;">NVIDIA Container</div>
<div class="t" style="top:727.80px;left:300px;">Arka plan işlemi</div>
<div class="t" style="top:727.80px;right:1208px;">%1,0</div>
<div class="t" style="top:727.80px;right:1117px;">13,2 MB</div>
<div class="t" style="top:727.80px;right:1026px;">2,5 MB/sn</div>
<div class="t" style="top:727.80px;right:935px;">0 Mb/sn</div>
<div class="t" style="top:727.80px;right:844px;">%26,8</div>
<div class="t" style="top:727.80px;left:1092px;">GPU 0 - V...</div>
<div class="t" style="top:727.80px;left:1182px;">Düşük</div>
<div class="t" style="top:727.80px;left:1307px;">Çok düşük</div>
<div class="a" style="left:629px;top:755px;width:92px;height:35px;background:#fff4c4"></div>
<div class="a" style="left:721px;top:755px;width:90px;height:35px;background:#f9eca8"></div>
<div class="a" style="left:811px;top:755px;width:91px;height:35px;background:#fff4c4"></div>
<div class="a" style="left:902px;top:755px;width:91px;height:35px;background:#fff4c4"></div>
<div class="a" style="left:993px;top:755px;width:91px;height:35px;background:#fff4c4"></div>
<div class="a" style="left:1174px;top:755px;width:125px;height:35px;background:#fff4c4"></div>
<div class="a" style="left:1299px;top:755px;width:155px;height:35px;background:#fff4c4"></div>
<div class="a" style="left:37px;top:762px"><svg width="20" height="20" viewBox="0 0 20 20"><path d="M10.00 4.60 L18.42 4.60 A10 10 0 0 0 1.12 5.41 L5.32 12.70 Z" fill="#e33b2e"/><path d="M14.68 12.70 L10.47 19.99 A10 10 0 0 0 18.42 4.60 L10.00 4.60 Z" fill="#fbbf1a"/><path d="M5.32 12.70 L1.12 5.41 A10 10 0 0 0 10.47 19.99 L14.68 12.70 Z" fill="#239a48"/><circle cx="10" cy="10" r="5.5" fill="#fff"/><circle cx="10" cy="10" r="4.4" fill="#3b7ee8"/></svg></div>
<div class="t" style="top:762.80px;left:64px;">Google Chrome</div>
<div class="t" style="top:762.80px;left:300px;">Arka plan işlemi</div>
<div class="t" style="top:762.80px;right:1208px;">%0</div>
<div class="t" style="top:762.80px;right:1117px;">8,5 MB</div>
<div class="t" style="top:762.80px;right:1026px;">0 MB/sn</div>
<div class="t" style="top:762.80px;right:935px;">0 Mb/sn</div>
<div class="t" style="top:762.80px;right:844px;">%0</div>
<div class="t" style="top:762.80px;left:1182px;">Çok düşük</div>
<div class="t" style="top:762.80px;left:1307px;">Çok düşük</div>
<div class="a" style="left:629px;top:790px;width:92px;height:35px;background:#fff4c4"></div>
<div class="a" style="left:721px;top:790px;width:90px;height:35px;background:#f9eca8"></div>
<div class="a" style="left:811px;top:790px;width:91px;height:35px;background:#f9eca8"></div>
<div class="a" style="left:902px;top:790px;width:91px;height:35px;background:#fff4c4"></div>
<div class="a" style="left:993px;top:790px;width:91px;height:35px;background:#fff4c4"></div>
<div class="a" style="left:1174px;top:790px;width:125px;height:35px;background:#fff4c4"></div>
<div class="a" style="left:1299px;top:790px;width:155px;height:35px;background:#fff4c4"></div>
<svg class="a" style="left:12px;top:800px" width="10" height="14" viewBox="0 0 10 14"><path d="M2 2 L7 6.5 L2 11" stroke="#a0a0a0" stroke-width="2" fill="none"/></svg>
<div class="a" style="left:37px;top:797px"><svg width="20" height="20" viewBox="0 0 20 20"><defs><linearGradient id="gg" x1="0" y1="0" x2="1" y2="1"><stop offset="0" stop-color="#c8f2fd"/><stop offset="1" stop-color="#7ba6e4"/></linearGradient></defs><rect x="0.5" y="0.5" width="19" height="19" fill="url(#gg)" stroke="#bccad8"/><g fill="#fff" transform="rotate(22 10 10)"><circle cx="10" cy="10" r="5.2"/><rect x="8.6" y="2.8" width="2.8" height="14.4"/><rect x="2.8" y="8.6" width="14.4" height="2.8"/><rect x="8.6" y="2.8" width="2.8" height="14.4" transform="rotate(45 10 10)"/><rect x="8.6" y="2.8" width="2.8" height="14.4" transform="rotate(-45 10 10)"/></g><circle cx="10" cy="10" r="2.9" fill="#a4cdf0"/></svg></div>
<div class="t" style="top:797.80px;left:64px;">Hizmet Ana Bilgisayarı: Uzaktan...</div>
<div class="t" style="top:797.80px;left:300px;">Windows işlemi</div>
<div class="t" style="top:797.80px;right:1208px;">%0</div>
<div class="t" style="top:797.80px;right:1117px;">6,1 MB</div>
<div class="t" style="top:797.80px;right:1026px;">0,1 MB/sn</div>
<div class="t" style="top:797.80px;right:935px;">0 Mb/sn</div>
<div class="t" style="top:797.80px;right:844px;">%0</div>
<div class="t" style="top:797.80px;left:1182px;">Çok düşük</div>
<div class="t" style="top:797.80px;left:1307px;">Çok düşük</div>
<div class="a" style="left:629px;top:825px;width:92px;height:35px;background:#fff4c4"></div>
<div class="a" style="left:721px;top:825px;width:90px;height:35px;background:#f9eca8"></div>
<div class="a" style="left:811px;top:825px;width:91px;height:35px;background:#fff4c4"></div>
<div class="a" style="left:902px;top:825px;width:91px;height:35px;background:#fff4c4"></div>
<div class="a" style="left:993px;top:825px;width:91px;height:35px;background:#fff4c4"></div>
<div class="a" style="left:1174px;top:825px;width:125px;height:35px;background:#fff4c4"></div>
<div class="a" style="left:1299px;top:825px;width:155px;height:35px;background:#fff4c4"></div>
<svg class="a" style="left:12px;top:835px" width="10" height="14" viewBox="0 0 10 14"><path d="M2 2 L7 6.5 L2 11" stroke="#a0a0a0" stroke-width="2" fill="none"/></svg>
<div class="a" style="left:37px;top:832px"><svg width="20" height="20" viewBox="0 0 20 20"><defs><linearGradient id="gg" x1="0" y1="0" x2="1" y2="1"><stop offset="0" stop-color="#c8f2fd"/><stop offset="1" stop-color="#7ba6e4"/></linearGradient></defs><rect x="0.5" y="0.5" width="19" height="19" fill="url(#gg)" stroke="#bccad8"/><g fill="#fff" transform="rotate(22 10 10)"><circle cx="10" cy="10" r="5.2"/><rect x="8.6" y="2.8" width="2.8" height="14.4"/><rect x="2.8" y="8.6" width="14.4" height="2.8"/><rect x="8.6" y="2.8" width="2.8" height="14.4" transform="rotate(45 10 10)"/><rect x="8.6" y="2.8" width="2.8" height="14.4" transform="rotate(-45 10 10)"/></g><circle cx="10" cy="10" r="2.9" fill="#a4cdf0"/></svg></div>
<div class="t" style="top:832.80px;left:64px;">Hizmet Ana Bilgisayarı: DCOM S...</div>
<div class="t" style="top:832.80px;left:300px;">Windows işlemi</div>
<div class="t" style="top:832.80px;right:1208px;">%0</div>
<div class="t" style="top:832.80px;right:1117px;">6,0 MB</div>
<div class="t" style="top:832.80px;right:1026px;">0 MB/sn</div>
<div class="t" style="top:832.80px;right:935px;">0 Mb/sn</div>
<div class="t" style="top:832.80px;right:844px;">%0</div>
<div class="t" style="top:832.80px;left:1182px;">Çok düşük</div>
<div class="t" style="top:832.80px;left:1307px;">Çok düşük</div>
<div class="a" style="left:629px;top:860px;width:92px;height:35px;background:#fff4c4"></div>
<div class="a" style="left:721px;top:860px;width:90px;height:35px;background:#f9eca8"></div>
<div class="a" style="left:811px;top:860px;width:91px;height:35px;background:#fff4c4"></div>
<div class="a" style="left:902px;top:860px;width:91px;height:35px;background:#fff4c4"></div>
<div class="a" style="left:993px;top:860px;width:91px;height:35px;background:#fff4c4"></div>
<div class="a" style="left:1174px;top:860px;width:125px;height:35px;background:#fff4c4"></div>
<div class="a" style="left:1299px;top:860px;width:155px;height:35px;background:#fff4c4"></div>
<svg class="a" style="left:12px;top:870px" width="10" height="14" viewBox="0 0 10 14"><path d="M2 2 L7 6.5 L2 11" stroke="#a0a0a0" stroke-width="2" fill="none"/></svg>
<div class="a" style="left:37px;top:867px"><svg width="20" height="20" viewBox="0 0 20 20"><defs><linearGradient id="gg" x1="0" y1="0" x2="1" y2="1"><stop offset="0" stop-color="#c8f2fd"/><stop offset="1" stop-color="#7ba6e4"/></linearGradient></defs><rect x="0.5" y="0.5" width="19" height="19" fill="url(#gg)" stroke="#bccad8"/><g fill="#fff" transform="rotate(22 10 10)"><circle cx="10" cy="10" r="5.2"/><rect x="8.6" y="2.8" width="2.8" height="14.4"/><rect x="2.8" y="8.6" width="14.4" height="2.8"/><rect x="8.6" y="2.8" width="2.8" height="14.4" transform="rotate(45 10 10)"/><rect x="8.6" y="2.8" width="2.8" height="14.4" transform="rotate(-45 10 10)"/></g><circle cx="10" cy="10" r="2.9" fill="#a4cdf0"/></svg></div>
<div class="t" style="top:867.80px;left:64px;">Hizmet Ana Bilgisayarı: Bağlı Ci...</div>
<div class="t" style="top:867.80px;left:300px;">Windows işlemi</div>
<div class="t" style="top:867.80px;right:1208px;">%0</div>
<div class="t" style="top:867.80px;right:1117px;">5,8 MB</div>
<div class="t" style="top:867.80px;right:1026px;">0 MB/sn</div>
<div class="t" style="top:867.80px;right:935px;">0 Mb/sn</div>
<div class="t" style="top:867.80px;right:844px;">%0</div>
<div class="t" style="top:867.80px;left:1182px;">Çok düşük</div>
<div class="t" style="top:867.80px;left:1307px;">Çok düşük</div>
<div class="a" style="left:629px;top:895px;width:92px;height:35px;background:#fff4c4"></div>
<div class="a" style="left:721px;top:895px;width:90px;height:35px;background:#f9eca8"></div>
<div class="a" style="left:811px;top:895px;width:91px;height:35px;background:#f9eca8"></div>
<div class="a" style="left:902px;top:895px;width:91px;height:35px;background:#fff4c4"></div>
<div class="a" style="left:993px;top:895px;width:91px;height:35px;background:#fff4c4"></div>
<div class="a" style="left:1174px;top:895px;width:125px;height:35px;background:#fff4c4"></div>
<div class="a" style="left:1299px;top:895px;width:155px;height:35px;background:#fff4c4"></div>
<div class="a" style="left:37px;top:902px"><svg width="20" height="20" viewBox="0 0 20 20"><rect x="1.5" y="3.5" width="17" height="13" fill="#f7f7f7" stroke="#8c8c8c"/><rect x="2" y="4" width="16" height="1.5" fill="#dedede"/><rect x="14" y="4.2" width="1" height="1" fill="#888"/><rect x="16" y="4.2" width="1" height="1" fill="#888"/><rect x="5.5" y="7" width="6.5" height="7.5" fill="#1372d6"/><rect x="13" y="7.5" width="4" height="1" fill="#a0a0a0"/><rect x="13" y="10" width="4" height="1" fill="#a0a0a0"/><rect x="13" y="12.5" width="4" height="1" fill="#a0a0a0"/><rect x="2.8" y="8" width="1.6" height="1" fill="#a0a0a0"/><rect x="2.8" y="10.5" width="1.6" height="1" fill="#a0a0a0"/><rect x="2.8" y="13" width="1.6" height="1" fill="#a0a0a0"/></svg></div>
<div class="t" style="top:902.80px;left:64px;">Registry</div>
<div class="t" style="top:902.80px;left:300px;">Windows işlemi</div>
<div class="t" style="top:902.80px;right:1208px;">%0</div>
<div class="t" style="top:902.80px;right:1117px;">5,7 MB</div>
<div class="t" style="top:902.80px;right:1026px;">0,1 MB/sn</div>
<div class="t" style="top:902.80px;right:935px;">0 Mb/sn</div>
<div class="t" style="top:902.80px;right:844px;">%0</div>
<div class="t" style="top:902.80px;left:1182px;">Çok düşük</div>
<div class="t" style="top:902.80px;left:1307px;">Çok düşük</div>
<div class="a" style="left:629px;top:930px;width:92px;height:35px;background:#f9eca8"></div>
<div class="a" style="left:721px;top:930px;width:90px;height:35px;background:#f9eca8"></div>
<div class="a" style="left:811px;top:930px;width:91px;height:35px;background:#fff4c4"></div>
<div class="a" style="left:902px;top:930px;width:91px;height:35px;background:#fff4c4"></div>
<div class="a" style="left:993px;top:930px;width:91px;height:35px;background:#fff4c4"></div>
<div class="a" style="left:1174px;top:930px;width:125px;height:35px;background:#fff4c4"></div>
<div class="a" style="left:1299px;top:930px;width:155px;height:35px;background:#fff4c4"></div>
<div class="a" style="left:37px;top:937px"><svg width="20" height="20" viewBox="0 0 20 20"><rect x="1.5" y="3.5" width="17" height="13" fill="#f7f7f7" stroke="#8c8c8c"/><rect x="2" y="4" width="16" height="1.5" fill="#dedede"/><rect x="14" y="4.2" width="1" height="1" fill="#888"/><rect x="16" y="4.2" width="1" height="1" fill="#888"/><rect x="5.5" y="7" width="6.5" height="7.5" fill="#1372d6"/><rect x="13" y="7.5" width="4" height="1" fill="#a0a0a0"/><rect x="13" y="10" width="4" height="1" fill="#a0a0a0"/><rect x="13" y="12.5" width="4" height="1" fill="#a0a0a0"/><rect x="2.8" y="8" width="1.6" height="1" fill="#a0a0a0"/><rect x="2.8" y="10.5" width="1.6" height="1" fill="#a0a0a0"/><rect x="2.8" y="13" width="1.6" height="1" fill="#a0a0a0"/></svg></div>
<div class="t" style="top:937.80px;left:64px;">Windows Ses Aygıtı Grafik Yalıtı...</div>
<div class="t" style="top:937.80px;left:300px;">Arka plan işlemi</div>
<div class="t" style="top:937.80px;right:1208px;">%0,3</div>
<div class="t" style="top:937.80px;right:1117px;">5,4 MB</div>
<div class="t" style="top:937.80px;right:1026px;">0 MB/sn</div>
<div class="t" style="top:937.80px;right:935px;">0 Mb/sn</div>
<div class="t" style="top:937.80px;right:844px;">%0</div>
<div class="t" style="top:937.80px;left:1182px;">Çok düşük</div>
<div class="t" style="top:937.80px;left:1307px;">Çok düşük</div>
<div class="a" style="left:629px;top:965px;width:92px;height:4px;background:#fff4c4"></div>
<div class="a" style="left:721px;top:965px;width:90px;height:4px;background:#f9eca8"></div>
<div class="a" style="left:811px;top:965px;width:91px;height:4px;background:#f9eca8"></div>
<div class="a" style="left:902px;top:965px;width:91px;height:4px;background:#fff4c4"></div>
<div class="a" style="left:993px;top:965px;width:91px;height:4px;background:#fff4c4"></div>
<div class="a" style="left:1174px;top:965px;width:125px;height:4px;background:#fff4c4"></div>
<div class="a" style="left:1299px;top:965px;width:155px;height:4px;background:#fff4c4"></div>
<div class="a" style="left:629px;top:160px;width:1px;height:809px;background:#ebd7a6"></div>
<div class="a" style="left:902px;top:160px;width:1px;height:809px;background:#ebd7a6"></div>
<div class="a" style="left:993px;top:160px;width:1px;height:809px;background:#ebd7a6"></div>
<div class="a" style="left:1084px;top:160px;width:1px;height:809px;background:#ebd7a6"></div>
<div class="a" style="left:1174px;top:160px;width:1px;height:809px;background:#ebd7a6"></div>
<div class="a" style="left:1299px;top:160px;width:1px;height:809px;background:#ebd7a6"></div>
<div class="a" style="left:1454px;top:160px;width:1px;height:809px;background:#ebd7a6"></div>
<div class="a" style="left:721px;top:160px;width:1px;height:809px;background:#f7793f"></div>
<div class="a" style="left:811px;top:160px;width:1px;height:809px;background:#f7793f"></div>
<div class="a" style="left:1900px;top:160px;width:20px;height:809px;background:#f0f0f0"></div>
<div class="a" style="left:1900px;top:181px;width:19px;height:100px;background:#cdcdcd"></div>
<svg class="a" style="left:1904px;top:166px" width="11" height="8" viewBox="0 0 11 8"><path d="M0.8 7 L5.5 1.8 L10.2 7" stroke="#606060" stroke-width="1.6" fill="none"/></svg>
<svg class="a" style="left:1904px;top:954px" width="11" height="8" viewBox="0 0 11 8"><path d="M0.8 1 L5.5 6.2 L10.2 1" stroke="#606060" stroke-width="1.6" fill="none"/></svg>
<div class="a" style="left:1px;top:969px;width:1919px;height:1px;background:#a0a0a0"></div>
<svg class="a" style="left:10px;top:988px" width="25" height="25" viewBox="0 0 25 25"><circle cx="12.5" cy="12.5" r="11.8" stroke="#8a8a8a" stroke-width="1" fill="none"/><path d="M6.5 15 L12.5 9 L18.5 15" stroke="#a8a8a8" stroke-width="1.2" fill="none"/></svg>
<div class="t" style="top:990.80px;left:42px;">Daha az ayrıntı</div>
<div class="t" style="left:1486px;top:925px;font-size:25px;line-height:30px;height:30px;letter-spacing:0;color:rgba(120,120,120,0.45)">Windows'u Etkinleştir</div>
<div class="t" style="left:1486px;top:957px;font-size:18px;line-height:24px;height:24px;letter-spacing:0;color:rgba(120,120,120,0.45)">Windows'u etkinleştirmek için Ayarlar'a gidin.</div>
<div class="a" style="left:1793px;top:986px;width:116px;height:27px;background:#cccccc;border:1px solid #bcbcbc"></div>
<div class="t" style="top:989.80px;left:1797px;color:#6b7898;">Görevi sonlandır</div>
<div class="a" style="left:0;top:1030px;width:1920px;height:50px;background:#1b1b24"></div>
<svg class="a" style="left:20px;top:1045px" width="21" height="21" viewBox="0 0 21 21"><path d="M0 3 L8.5 1.8 V9.8 H0 Z M9.8 1.6 L21 0 V9.8 H9.8 Z M0 11.2 H8.5 V19.2 L0 18 Z M9.8 11.2 H21 V21 L9.8 19.4 Z" fill="#fff"/></svg>
<div class="a" style="left:60px;top:1030px;width:360px;height:50px;background:#f0f0f0;border-top:1px solid #c8c8c8"></div>
<svg class="a" style="left:74px;top:1044px" width="22" height="22" viewBox="0 0 22 22"><circle cx="13.5" cy="8" r="6.3" stroke="#111" stroke-width="1.6" fill="none"/><path d="M9 12.5 L1.5 20" stroke="#111" stroke-width="1.8"/></svg>
<div class="t" style="left:110px;top:1045.76px;font-size:18px;color:#222">Ara</div>
<svg class="a" style="left:320px;top:1031px" width="100" height="49" viewBox="0 1 100 49">
<defs><linearGradient id="rk" x1="0" y1="0" x2="1" y2="1"><stop offset="0" stop-color="#f9bd6a"/><stop offset="0.55" stop-color="#e0703a"/><stop offset="1" stop-color="#9a3020"/></linearGradient>
<linearGradient id="sp" x1="0" y1="0" x2="0" y2="1"><stop offset="0" stop-color="#f0a070"/><stop offset="1" stop-color="#d98070"/></linearGradient></defs>
<path d="M9 38 Q20 32 40 34 Q50 30 60 24 Q75 14 88 22 Q95 30 92 38 Q94 44 80 47 Q50 50 25 46 Q8 44 9 38 Z" fill="#9dbb4a"/>
<path d="M8 30 L36 17 L46 14 L47 26 L42 34 L15 35 Z" fill="#dcae6a"/>
<path d="M40 15 Q48 13 56 15 L70 18 L68 30 Q56 32 50 30 L44 24 Z" fill="#e8b470"/><path d="M52 30 Q60 26 70 24 L88 24 L92 40 L60 46 Z" fill="#9dbb4a"/>
<path d="M44 15 Q38 19 48 25 Q55 30 56 38 Q58 45 76 48 L58 48 Q46 46 44 40 Q42 32 37 26 Q32 19 39 15 Z" fill="#fddfb6"/>
<path d="M43 18 Q43 7 46 6 Q49 7 49 18 Z M49 18 Q49 5 52.5 4 Q56 5 56 18 Z M56 18 Q56 8 59.5 7 Q63 9 63 18 Z" fill="url(#sp)"/>
<path d="M59 29 Q60 23 66 22 Q69 23 69 29 Z" fill="#d5806a"/>
<path d="M66 43 Q64 25 70 12 Q74 4 79 6 Q85 10 86 22 Q88 35 86 43 Z" fill="url(#rk)"/>
<path d="M27 32 L26 30 L19 30 L24 27 L21 24 L25 23.5 L22 21 L26 20 L27 15 L29 19.5 L32 20 L30 23 L34 23.5 L31 26 L35 29.5 L28 30 Z" fill="#4f9426"/>
<path d="M17 35 Q18 33 24 33 Q28 34 27 38 Q23 40 17 39 Z" fill="#f6d030"/>
<path d="M26 36 Q28 33 36 32 Q44 32 45 35 Q43 39 35 39 Q28 40 26 36 Z" fill="#e030e0"/>
<path d="M20 40 L28 39 L44 38 L42 44 L30 45 Z" fill="#6aa838"/>
</svg>
<svg class="a" style="left:439px;top:1044px" width="22" height="21" viewBox="0 0 22 21"><path d="M0.5 0 V2.5 H13 V0 M0.5 21 V18.5 H13 V21 M1.5 5.5 H12 V15.5 H1.5 Z M19.5 0 V21" stroke="#fff" stroke-width="1.3" fill="none"/><rect x="18" y="8" width="3" height="3" fill="#fff"/></svg>
<svg class="a" style="left:500px;top:1043px" width="28" height="24" viewBox="0 0 28 24"><path d="M0 1 Q0 0 1 0 H9 L11 2.5 H27 Q28 2.5 28 3.5 V22 Q28 23 27 23 H1 Q0 23 0 22 Z" fill="#e8a818"/><path d="M0 5 H28 V22 Q28 23 27 23 H1 Q0 23 0 22 Z" fill="#fcd462"/><path d="M5 24 V15 Q5 13 7 13 H21 Q23 13 23 15 V24 H19 V17 H9 V24 Z" fill="#3d96e0"/></svg>
<div class="a" style="left:561px;top:1040px"><svg width="30" height="30" viewBox="0 0 20 20"><path d="M10.00 4.60 L18.42 4.60 A10 10 0 0 0 1.12 5.41 L5.32 12.70 Z" fill="#e33b2e"/><path d="M14.68 12.70 L10.47 19.99 A10 10 0 0 0 18.42 4.60 L10.00 4.60 Z" fill="#fbbf1a"/><path d="M5.32 12.70 L1.12 5.41 A10 10 0 0 0 10.47 19.99 L14.68 12.70 Z" fill="#239a48"/><circle cx="10" cy="10" r="5.5" fill="#fff"/><circle cx="10" cy="10" r="4.4" fill="#3b7ee8"/></svg></div>
<svg class="a" style="left:622px;top:1039px" width="32" height="32" viewBox="0 0 32 32"><g fill="#27a8e0"><path d="M16 1 L24.5 9.5 L21.5 12.5 L16 7 L13 10 L10 7 Z"/><path d="M31 16 L22.5 24.5 L19.5 21.5 L25 16 L22 13 L25 10 Z"/><path d="M16 31 L7.5 22.5 L10.5 19.5 L16 25 L19 22 L22 25 Z"/><path d="M1 16 L9.5 7.5 L12.5 10.5 L7 16 L10 19 L7 22 Z"/><path d="M16 10 L22 16 L16 22 L10 16 Z"/></g><g transform="rotate(-35 8 8)"><rect x="3" y="3" width="10" height="9" rx="1.5" fill="#f4f4f8"/><path d="M5 5.5 H11 M5 7.5 H11 M5 9.5 H11" stroke="#8890b0" stroke-width="0.8"/></g><circle cx="9" cy="8" r="1.1" fill="#e8d820"/><g transform="rotate(-35 24 24)"><rect x="19" y="19" width="10" height="9" rx="1.5" fill="#f4f4f8"/><path d="M21 21.5 H27 M21 23.5 H27 M21 25.5 H27" stroke="#8890b0" stroke-width="0.8"/></g></svg>
<div class="a" style="left:685px;top:1040px"><svg width="30" height="30" viewBox="0 0 20 20"><circle cx="10" cy="10" r="10" fill="#5865f2"/><path d="M4.2 13.8 C4.1 10.8 4.9 8.3 6.2 6.6 C7.1 6.1 8 5.8 8.7 5.8 L9 6.4 C9.7 6.3 10.3 6.3 11 6.4 L11.3 5.8 C12 5.8 12.9 6.1 13.8 6.6 C15.1 8.3 15.9 10.8 15.8 13.8 C15 14.5 14 14.9 13.1 15.1 L12.5 14.2 C13 14 13.4 13.8 13.8 13.5 L13.5 13.3 C11.3 14.3 8.7 14.3 6.5 13.3 L6.2 13.5 C6.6 13.8 7 14 7.5 14.2 L6.9 15.1 C6 14.9 5 14.5 4.2 13.8 Z" fill="#fff"/><ellipse cx="8" cy="10.7" rx="1.2" ry="1.3" fill="#5865f2"/><ellipse cx="12" cy="10.7" rx="1.2" ry="1.3" fill="#5865f2"/></svg></div>
<div class="a" style="left:698px;top:1053px;width:18px;height:18px;border-radius:50%;background:#e5453d;color:#fff;font-size:12.5px;line-height:18px;text-align:center;letter-spacing:-0.5px">9+</div>
<svg class="a" style="left:747px;top:1040px" width="30" height="30" viewBox="0 0 30 30"><defs><radialGradient id="gl2" cx="0.6" cy="0.45" r="0.6"><stop offset="0" stop-color="#8eeaf8"/><stop offset="0.75" stop-color="#4ec0f0"/><stop offset="1" stop-color="#2f8ee0"/></radialGradient><linearGradient id="gp" x1="0" y1="0" x2="0" y2="1"><stop offset="0" stop-color="#4a2ec8"/><stop offset="1" stop-color="#8a52e0"/></linearGradient></defs><circle cx="15" cy="15" r="15" fill="url(#gl2)"/><path d="M3 21 Q10 26 20 24 Q26 22 28 18" stroke="#3a9ae8" stroke-width="1.4" fill="none"/><circle cx="14.5" cy="12" r="7.4" fill="url(#gp)"/><circle cx="15.8" cy="11.2" r="5.3" fill="#1b1b24"/><ellipse cx="21.5" cy="19" rx="1.4" ry="0.8" fill="#2a7fd0" transform="rotate(-20 21.5 19)"/></svg>
<div class="a" style="left:794px;top:1030px;width:61px;height:50px;background:#47474e"></div>
<svg class="a" style="left:808px;top:1042px" width="32" height="28" viewBox="0 0 32 28"><path d="M2 8 L8 6.5 L8 21 L2 22.5 Z" fill="#d4d4d4"/><rect x="2" y="9.5" width="1.6" height="1.6" fill="#3ac040"/><path d="M8 1 L29 3.5 L29 21.5 L8 19.5 Z" fill="#e6e6e6"/><path d="M9.5 3 L27.5 5 L27.5 20 L9.5 18 Z" fill="#f6fbff"/><path d="M9.5 11.5 L12 10 L13.5 5.5 L16 11 L19 12.5 L21 8.5 L23 13 L27.5 12.5 L27.5 20 L9.5 18 Z" fill="#c8e8f8"/><path d="M9.5 11.5 L12 10 L13.5 5.5 L16 11 L19 12.5 L21 8.5 L23 13 L27.5 12.5" stroke="#3a90d0" stroke-width="1" fill="none"/><ellipse cx="18" cy="24.5" rx="7" ry="3" fill="#d2d2d2"/></svg>
<div class="a" style="left:551px;top:1077px;width:51px;height:3px;background:#76b9ed"></div>
<div class="a" style="left:613px;top:1077px;width:51px;height:3px;background:#76b9ed"></div>
<div class="a" style="left:675px;top:1077px;width:51px;height:3px;background:#76b9ed"></div>
<div class="a" style="left:737px;top:1077px;width:51px;height:3px;background:#76b9ed"></div>
<div class="a" style="left:794px;top:1077px;width:61px;height:3px;background:#76b9ed"></div>
<svg class="a" style="left:1340px;top:1040px" width="30" height="32" viewBox="0 0 30 32"><rect x="1" y="13" width="23" height="8" rx="4" fill="#ea8208"/><ellipse cx="12.5" cy="16" rx="11" ry="3" fill="#f8a024"/><rect x="6" y="8" width="23" height="7.5" rx="3.75" fill="#ea8208"/><ellipse cx="17.5" cy="11" rx="11" ry="2.8" fill="#f8a024"/><rect x="1.5" y="2" width="22.5" height="8.5" rx="4" fill="#ea8208"/><ellipse cx="12.75" cy="5" rx="11" ry="3" fill="#f8a024"/><path d="M10 28.5 L15 23.5 L20 28.5" stroke="#6cb81c" stroke-width="3" fill="none"/></svg>
<div class="t" style="left:1380px;top:1047px;font-size:17px;color:#fff">EUR/USD</div>
<div class="t" style="left:1465px;top:1047px;font-size:17px;color:#1fc91f">+%0,24</div>
<svg class="a" style="left:1555px;top:1050px" width="17" height="10" viewBox="0 0 17 10"><path d="M0.7 9.3 L8.5 1.5 L16.3 9.3" stroke="#fff" stroke-width="1.2" fill="none"/></svg>
<svg class="a" style="left:1585px;top:1045px" width="15" height="21" viewBox="0 0 15 21"><rect x="3.5" y="0" width="8" height="14" rx="4" fill="#fff"/><path d="M1 10 Q1 16 7.5 16 Q14 16 14 10 M7.5 16 V20 M4 20.3 H11" stroke="#fff" stroke-width="1.1" fill="none"/></svg>
<svg class="a" style="left:1612px;top:1044px" width="22" height="22" viewBox="0 0 22 22"><path d="M1 3 L20 1 V19 L1 17 Z" stroke="#fff" stroke-width="1.2" fill="none"/><path d="M6 9 Q8 5 13 7 M13 7 L11 5 M8 11 Q10 14 14 12" stroke="#fff" stroke-width="1.1" fill="none"/><circle cx="16.5" cy="17.5" r="4" fill="#3a82d6"/></svg>
<svg class="a" style="left:1646px;top:1046px" width="16" height="19" viewBox="0 0 16 19"><rect x="1" y="5" width="9" height="9" rx="1.5" stroke="#fff" stroke-width="1.1" fill="none"/><path d="M10 8 L14.5 5.5 V13.5 L10 11" stroke="#fff" stroke-width="1.1" fill="none"/><path d="M2 2 Q6 0 12 2 M2 17 Q6 19 12 17" stroke="#bbb" stroke-width="1" fill="none"/></svg>
<svg class="a" style="left:1673px;top:1046px" width="21" height="18" viewBox="0 0 21 18"><rect x="3.5" y="1.5" width="17" height="11" stroke="#fff" stroke-width="1.1" fill="none"/><path d="M12 12.5 V16 M8 16.5 H16 M3 0 V18" stroke="#fff" stroke-width="1.1" fill="none"/><rect x="0.5" y="0.5" width="5" height="4" stroke="#fff" fill="#1b1b24"/></svg>
<svg class="a" style="left:1702px;top:1046px" width="22" height="18" viewBox="0 0 22 18"><path d="M1 6 H4 L9 1.5 V16.5 L4 12 H1 Z" stroke="#fff" stroke-width="1.1" fill="none"/><path d="M12 6.5 Q13.5 9 12 11.5 M15 4.5 Q18 9 15 13.5" stroke="#fff" stroke-width="1.1" fill="none"/><path d="M18 2 Q22 9 18 16" stroke="#888" stroke-width="1" fill="none"/></svg>
<svg class="a" style="left:1737px;top:1045px" width="22" height="21" viewBox="0 0 22 21"><path d="M4 20 Q0 17 3 14 Q6 12 8 15 M6 17 L15 3 Q17 1 18.5 2.5 Q19.5 4 18 6 L9 19 Z M15 9 Q20 8 21 10" stroke="#fff" stroke-width="1.1" fill="none"/></svg>
<div class="t" style="left:1793px;top:1033.6px;font-size:15px;color:#fff;letter-spacing:-0.3px">20:35</div>
<div class="t" style="left:1777px;top:1057.3px;font-size:15.5px;color:#fff;letter-spacing:-0.9px">16.01.2025</div>
<svg class="a" style="left:1868px;top:1039px" width="37" height="27" viewBox="0 0 37 27"><rect x="12" y="1" width="24" height="24" fill="#0c0c0e"/><path d="M1 6 H12 V23.5 H11 L8.5 26 L7 23.5 H1 Z" fill="#fff"/><rect x="12" y="6" width="5" height="17.5" fill="#555"/><path d="M5 10.5 H18 M5 14.5 H18 M5 18.5 H12" stroke="#111" stroke-width="1.2"/><circle cx="24" cy="13" r="6" stroke="#fff" stroke-width="1.6" fill="none"/><circle cx="24" cy="13" r="2.3" fill="#eee"/></svg>
<div class="a" style="left:1914px;top:1030px;width:1px;height:50px;background:#55555c"></div>
</body></html>
